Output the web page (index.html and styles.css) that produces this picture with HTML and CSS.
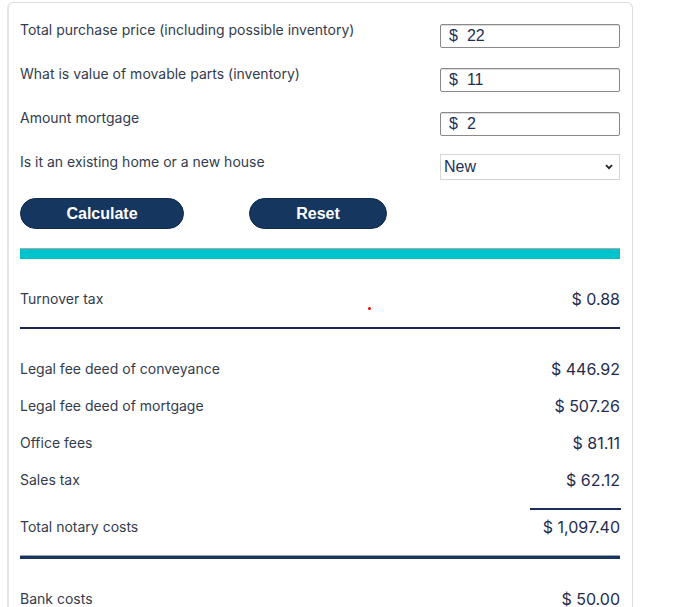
FILE: index.html
```html
<!DOCTYPE html>
<html>
<head>
<meta charset="utf-8">
<link rel="stylesheet" href="styles.css">
</head>
<body>
<div class="card">
  <div class="form-row">
    <label class="label">Total purchase price (including possible inventory)</label>
    <div class="field"><span class="cur">$</span><span class="val">22</span></div>
  </div>
  <div class="form-row">
    <label class="label">What is value of movable parts (inventory)</label>
    <div class="field"><span class="cur">$</span><span class="val">11</span></div>
  </div>
  <div class="form-row">
    <label class="label">Amount mortgage</label>
    <div class="field"><span class="cur">$</span><span class="val">2</span></div>
  </div>
  <div class="form-row">
    <label class="label">Is it an existing home or a new house</label>
    <div class="select"><span>New</span>
      <svg class="chev" width="8" height="6" viewBox="0 0 8 6"><path d="M1 1.2 L4 4.2 L7 1.2" fill="none" stroke="#222" stroke-width="1.8"/></svg>
    </div>
  </div>
  <div class="buttons">
    <button class="btn btn-calc">Calculate</button>
    <button class="btn btn-reset">Reset</button>
  </div>
  <div class="teal-bar"></div>
  <div class="results">
    <div class="res-row first"><span>Turnover tax</span><span class="amount">$ 0.88</span><i class="dot"></i></div>
    <div class="rule"></div>
    <div class="res-row gap-top"><span>Legal fee deed of conveyance</span><span class="amount">$ 446.92</span></div>
    <div class="res-row"><span>Legal fee deed of mortgage</span><span class="amount">$ 507.26</span></div>
    <div class="res-row"><span>Office fees</span><span class="amount">$ 81.11</span></div>
    <div class="res-row"><span>Sales tax</span><span class="amount">$ 62.12</span></div>
    <div class="short-rule-wrap"><div class="short-rule"></div></div>
    <div class="res-row total"><span>Total notary costs</span><span class="amount">$ 1,097.40</span></div>
    <div class="thick-rule"></div>
    <div class="res-row gap-top2"><span>Bank costs</span><span class="amount">$ 50.00</span></div>
  </div>
</div>
</body>
</html>
```
FILE: styles.css
```css
html, body { margin: 0; padding: 0; background: #fff; }
body { font-family: Inter, "Open Sans", "Liberation Sans", sans-serif; color: #333c4e; height: 607px; overflow: hidden; }
.card {
  margin: 2px 0 0 7px;
  width: 600px;
  padding: 17px 12px 0 11px;
  border: 1px solid #dcdcdc;
  border-left: 2px solid #e6e6e6;
  border-radius: 6px 6px 0 0;
  position: relative;
}
.form-row { display: flex; justify-content: space-between; align-items: flex-start; height: 44px; }
.label { font-size: 14px; line-height: 20px; }
.field {
  margin-top: 4px; width: 180px; height: 24px; box-sizing: border-box;
  border: 1px solid #8a8a8a; border-radius: 2px;
  box-shadow: inset 0 1px 1px rgba(0,0,0,0.15);
  display: flex; align-items: center; padding-left: 8px;
  font-family: "Liberation Sans", Arial, sans-serif; font-size: 16px; color: #1e2f56;
}
.cur { margin-right: 9px; }
.select {
  margin-top: 2px; width: 180px; height: 26px; box-sizing: border-box;
  border: 1px solid #d6d6d6; display: flex; align-items: center; justify-content: space-between;
  padding: 0 6px 0 3px;
  font-family: "Liberation Sans", Arial, sans-serif; font-size: 16px; color: #1e2f56;
}
.buttons { display: flex; gap: 65px; margin-top: 2px; }
.btn {
  height: 31px; border-radius: 16px; background: #15365f; color: #fff;
  border: 1px solid #0f2a4d;
  font-family: "Liberation Sans", Arial, sans-serif; font-weight: bold; font-size: 16px;
  padding: 0;
}
.btn-calc { width: 164px; }
.btn-reset { width: 138px; }
.teal-bar { margin-top: 19px; height: 10px; background: #00c3cc; border-top: 1px solid #a9a9a9; }
.results { position: relative; }
.res-row { display: flex; justify-content: space-between; align-items: center; height: 37px; font-size: 14px; position: relative; }
.res-row .amount { font-size: 16px; color: #1f2c4e; }
.res-row.first { margin-top: 21px; }
.rule { height: 2px; background: #1c2459; margin-top: 10px; }
.gap-top { margin-top: 21px; }
.short-rule-wrap { display: flex; justify-content: flex-end; margin-top: 10px; }
.short-rule { width: 91px; height: 2px; background: #1b2e57; margin-right: -1px; }
.res-row.total { margin-top: -2px; }
.thick-rule { height: 3px; background: #15365f; border-top: 1px solid #9aa0a8; margin-top: 10px; }
.gap-top2 { margin-top: 21px; }
.dot { position: absolute; left: 348px; top: 27px; width: 3px; height: 3px; background: #e00; border-radius: 50%; }
```
